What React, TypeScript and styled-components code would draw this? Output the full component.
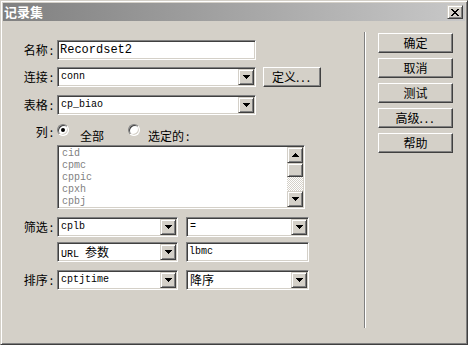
import React from "react";
import styled, { createGlobalStyle } from "styled-components";

const face = "#d4d0c8";
const cjk = `"Noto Sans CJK SC", "Liberation Sans", sans-serif`;
const mono = `"Liberation Mono", "Noto Sans CJK SC", monospace`;

const GlobalStyle = createGlobalStyle`
  html, body {
    margin: 0;
    padding: 0;
    background: ${face};
  }
  body {
    font-family: ${cjk};
    font-size: 12px;
    color: #000;
  }
`;

const Window = styled.div`
  box-sizing: border-box;
  width: 468px;
  height: 345px;
  display: flex;
  flex-direction: column;
  background: ${face};
  border: 1px solid;
  border-color: ${face} #404040 #404040 ${face};
  box-shadow: inset 1px 1px 0 #fff, inset -1px -1px 0 #808080;
  padding: 2px;
`;

const TitleBar = styled.div`
  flex: none;
  height: 18px;
  display: flex;
  align-items: center;
  justify-content: space-between;
  padding: 0 2px 0 1px;
  background: linear-gradient(to right, #808080, #c8c8c8);
`;

const TitleText = styled.span`
  color: #fff;
  font-weight: bold;
  font-size: 13px;
  line-height: 18px;
`;

const Raised = styled.div`
  box-sizing: border-box;
  background: ${face};
  border: 1px solid;
  border-color: ${face} #404040 #404040 ${face};
  box-shadow: inset 1px 1px 0 #fff, inset -1px -1px 0 #808080;
  display: flex;
  align-items: center;
  justify-content: center;
`;

const CloseButton = styled(Raised)`
  width: 16px;
  height: 14px;
`;

const Body = styled.div`
  flex: 1;
  display: flex;
`;

const FormPanel = styled.div`
  box-sizing: border-box;
  width: 361px;
  padding-top: 19px;
  display: flex;
  flex-direction: column;
`;

const Row = styled.div<{ $mt?: number }>`
  display: flex;
  align-items: center;
  margin-top: ${(p) => p.$mt ?? 0}px;
`;

const Label = styled.span`
  box-sizing: border-box;
  width: 54px;
  padding-right: 4px;
  text-align: right;
  font-size: 12px;
  line-height: 16px;
`;

const Colon = styled.span`
  margin-left: 2px;
`;

const Sunken = styled.div<{ $w: number; $h?: number }>`
  box-sizing: border-box;
  width: ${(p) => p.$w}px;
  height: ${(p) => p.$h ?? 20}px;
  background: #fff;
  border: 1px solid;
  border-color: #808080 #fff #fff #808080;
  box-shadow: inset 1px 1px 0 #404040, inset -1px -1px 0 ${face};
  padding: 1px;
  display: flex;
  align-items: stretch;
`;

const Value = styled.span<{ $big?: boolean; $pl?: number }>`
  flex: 1;
  padding-left: ${(p) => p.$pl ?? 2}px;
  font-family: ${mono};
  font-size: ${(p) => (p.$big ? 12 : 10)}px;
  line-height: 16px;
  white-space: nowrap;
  overflow: hidden;
`;

const Cjk = styled.span`
  font-family: ${cjk};
  font-size: 12px;
`;

const ArrowButton = styled(Raised)`
  width: 16px;
  flex: none;
`;

const PushButton = styled.button<{ $w: number }>`
  box-sizing: border-box;
  width: ${(p) => p.$w}px;
  height: 20px;
  padding: 0;
  background: ${face};
  border: 1px solid;
  border-color: #fff #404040 #404040 #fff;
  box-shadow: inset -1px -1px 0 #808080, inset 1px 1px 0 ${face};
  font-family: ${cjk};
  font-size: 12px;
  line-height: 16px;
  color: #000;
  flex: none;
`;

const Dots = styled.span`
  letter-spacing: 2px;
`;

const RadioCircle = styled.span<{ $on?: boolean }>`
  box-sizing: border-box;
  width: 12px;
  height: 12px;
  border-radius: 50%;
  background: #fff;
  border: 1px solid;
  border-color: #808080 #fff #fff #808080;
  box-shadow: inset 1px 1px 0 #404040, inset -1px -1px 0 ${face};
  display: flex;
  align-items: center;
  justify-content: center;
  flex: none;
  &::after {
    content: "";
    width: 4px;
    height: 4px;
    border-radius: 50%;
    background: ${(p) => (p.$on ? "#000" : "transparent")};
  }
`;

const RadioText = styled.span<{ $ml: number }>`
  margin-left: ${(p) => p.$ml}px;
  margin-top: 5px;
  line-height: 14px;
`;

const Items = styled.div`
  flex: 1;
  padding: 1px 3px;
  font-family: ${mono};
  font-size: 10px;
  line-height: 12px;
  color: #808080;
`;

const ScrollBar = styled.div`
  width: 16px;
  display: flex;
  flex-direction: column;
`;

const ScrollButton = styled(Raised)`
  height: 16px;
  flex: none;
`;

const Thumb = styled(Raised)`
  height: 14px;
  flex: none;
`;

const Track = styled.div`
  flex: 1;
  background: repeating-conic-gradient(#fff 0 25%, ${face} 0 50%) 0 0 / 2px 2px;
`;

const Separator = styled.div`
  box-sizing: border-box;
  width: 2px;
  margin: 11px 0 14px;
  border-left: 1px solid #808080;
  border-right: 1px solid #fff;
`;

const ButtonColumn = styled.div`
  display: flex;
  flex-direction: column;
  gap: 5px;
  padding: 12px 0 0 12px;
`;

const Arrow: React.FC<{ up?: boolean }> = ({ up }) => (
  <svg width="7" height="4" viewBox="0 0 7 4" shapeRendering="crispEdges">
    <g transform={up ? "matrix(1 0 0 -1 0 4)" : undefined} fill="#000">
      <rect x="0" y="0" width="7" height="1" />
      <rect x="1" y="1" width="5" height="1" />
      <rect x="2" y="2" width="3" height="1" />
      <rect x="3" y="3" width="1" height="1" />
    </g>
  </svg>
);

const CloseGlyph: React.FC = () => (
  <svg width="8" height="7" viewBox="0 0 8 7" shapeRendering="crispEdges" fill="#000">
    <rect x="0" y="0" width="2" height="1" />
    <rect x="6" y="0" width="2" height="1" />
    <rect x="1" y="1" width="2" height="1" />
    <rect x="5" y="1" width="2" height="1" />
    <rect x="2" y="2" width="4" height="1" />
    <rect x="3" y="3" width="2" height="1" />
    <rect x="2" y="4" width="4" height="1" />
    <rect x="1" y="5" width="2" height="1" />
    <rect x="5" y="5" width="2" height="1" />
    <rect x="0" y="6" width="2" height="1" />
    <rect x="6" y="6" width="2" height="1" />
  </svg>
);

const Select: React.FC<{ w: number; children: React.ReactNode }> = ({ w, children }) => (
  <Sunken $w={w}>
    <Value>{children}</Value>
    <ArrowButton>
      <Arrow />
    </ArrowButton>
  </Sunken>
);

const FieldLabel: React.FC<{ text?: string }> = ({ text }) => (
  <Label>
    {text}
    {text && <Colon>:</Colon>}
  </Label>
);

const columns = ["cid", "cpmc", "cppic", "cpxh", "cpbj"];
const sideButtons = ["确定", "取消", "测试", "高级", "帮助"];

export default function App() {
  return (
    <>
      <GlobalStyle />
      <Window>
        <TitleBar>
          <TitleText>记录集</TitleText>
          <CloseButton>
            <CloseGlyph />
          </CloseButton>
        </TitleBar>
        <Body>
          <FormPanel>
            <Row>
              <FieldLabel text="名称" />
              <Sunken $w={199}>
                <Value $big $pl={1}>Recordset2</Value>
              </Sunken>
            </Row>
            <Row $mt={7}>
              <FieldLabel text="连接" />
              <Select w={199}>conn</Select>
              <PushButton $w={58} style={{ marginLeft: 7 }}>
                定义<Dots>...</Dots>
              </PushButton>
            </Row>
            <Row $mt={8}>
              <FieldLabel text="表格" />
              <Select w={199}>cp_biao</Select>
            </Row>
            <Row $mt={9} style={{ alignItems: "flex-start", height: 14 }}>
              <FieldLabel text="列" />
              <RadioCircle $on />
              <RadioText $ml={11}>全部</RadioText>
              <RadioCircle style={{ marginLeft: 24 }} />
              <RadioText $ml={8}>
                选定的<Colon>:</Colon>
              </RadioText>
            </Row>
            <Row $mt={7}>
              <FieldLabel />
              <Sunken $w={248} $h={64}>
                <Items>
                  {columns.map((c) => (
                    <div key={c}>{c}</div>
                  ))}
                </Items>
                <ScrollBar>
                  <ScrollButton>
                    <Arrow up />
                  </ScrollButton>
                  <Thumb />
                  <Track />
                  <ScrollButton>
                    <Arrow />
                  </ScrollButton>
                </ScrollBar>
              </Sunken>
            </Row>
            <Row $mt={8}>
              <FieldLabel text="筛选" />
              <Select w={121}>cplb</Select>
              <div style={{ width: 8 }} />
              <Select w={123}>=</Select>
            </Row>
            <Row $mt={5}>
              <FieldLabel />
              <Select w={121}>
                URL <Cjk>参数</Cjk>
              </Select>
              <div style={{ width: 8 }} />
              <Sunken $w={123}>
                <Value $pl={1}>lbmc</Value>
              </Sunken>
            </Row>
            <Row $mt={8}>
              <FieldLabel text="排序" />
              <Select w={121}>cptjtime</Select>
              <div style={{ width: 8 }} />
              <Select w={123}>
                <Cjk>降序</Cjk>
              </Select>
            </Row>
          </FormPanel>
          <Separator />
          <ButtonColumn>
            {sideButtons.map((b) => (
              <PushButton key={b} $w={75}>
                {b}
                {b === "高级" && <Dots>...</Dots>}
              </PushButton>
            ))}
          </ButtonColumn>
        </Body>
      </Window>
    </>
  );
}
